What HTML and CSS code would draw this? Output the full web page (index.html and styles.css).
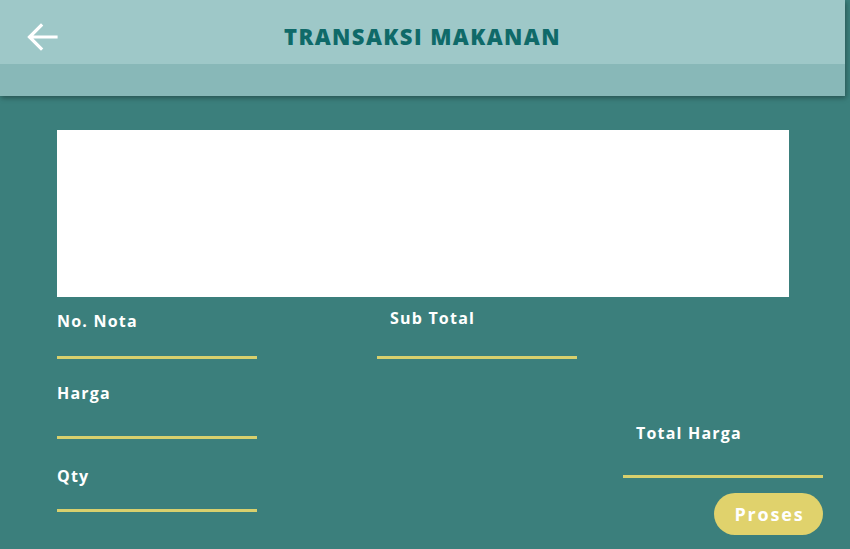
FILE: index.html
```html
<!DOCTYPE html>
<html>
<head>
<meta charset="utf-8">
<link rel="stylesheet" href="styles.css">
</head>
<body>
<header class="appbar">
  <div class="appbar-top">
    <svg class="back" width="32" height="28" viewBox="0 0 32 28"><path d="M30 14H4M15 2.5L3.5 14L15 25.5" fill="none" stroke="#fff" stroke-width="3.2" stroke-linecap="square"/></svg>
    <h1 class="title">TRANSAKSI MAKANAN</h1>
  </div>
  <div class="appbar-bottom"></div>
</header>
<main class="content">
  <div class="table-box"></div>
  <div class="fields">
    <div class="col col-1">
      <div class="field f-nota"><div class="label">No. Nota</div><div class="line"></div></div>
      <div class="field f-harga"><div class="label">Harga</div><div class="line"></div></div>
      <div class="field f-qty"><div class="label">Qty</div><div class="line"></div></div>
    </div>
    <div class="col col-2">
      <div class="field f-sub"><div class="label">Sub Total</div><div class="line"></div></div>
    </div>
    <div class="col col-3">
      <div class="field f-total"><div class="label">Total Harga</div><div class="line"></div></div>
      <button class="btn">Proses</button>
    </div>
  </div>
</main>
</body>
</html>
```
FILE: styles.css
```css
html, body { margin: 0; padding: 0; }
body {
  width: 850px;
  height: 549px;
  overflow: hidden;
  background: #3b7f7c;
  font-family: "Open Sans", "Liberation Sans", sans-serif;
}
.appbar {
  width: 845px;
  box-shadow: 1px 2px 5px rgba(0,0,0,0.35);
  position: relative;
}
.appbar-top {
  height: 64px;
  background: #9ec8c8;
  display: flex;
  align-items: center;
  position: relative;
}
.back { margin-left: 26px; margin-top: 10px; }
.title {
  position: absolute;
  left: 0; right: 0;
  top: 0;
  margin: 0;
  line-height: 72px;
  text-align: center;
  font-size: 22px;
  font-weight: 800;
  letter-spacing: 1.4px;
  color: #0f6a69;
}
.appbar-bottom { height: 32px; background: #88b8b8; }
.content { padding: 34px 0 0 57px; }
.table-box { width: 732px; height: 167px; background: #fff; }
.fields { display: flex; align-items: flex-start; }
.col { display: flex; flex-direction: column; }
.label {
  color: #fff;
  font-size: 16px;
  font-weight: 700;
  letter-spacing: 1.2px;
  line-height: 24px;
}
.line { width: 200px; height: 3px; background: #d8d06d; }
.f-nota { margin-top: 12px; }
.f-nota .line { margin-top: 23px; }
.f-harga { margin-top: 22px; }
.f-harga .line { margin-top: 31px; }
.f-qty { margin-top: 25px; }
.f-qty .line { margin-top: 21px; }
.col-2 { margin-left: 120px; }
.f-sub { margin-top: 9px; }
.f-sub .label { padding-left: 13px; }
.f-sub .line { margin-top: 26px; }
.col-3 { margin-left: 46px; margin-top: 124px; }
.f-total .label { padding-left: 13px; }
.f-total .line { margin-top: 30px; }
.btn {
  align-self: flex-end;
  margin-top: 15px;
  width: 109px;
  height: 42px;
  border: none;
  border-radius: 21px;
  background: #e0d26c;
  color: #fff;
  font-family: inherit;
  font-size: 18px;
  font-weight: 700;
  letter-spacing: 1.8px;
  padding: 0 0 0 2px;
}
```
